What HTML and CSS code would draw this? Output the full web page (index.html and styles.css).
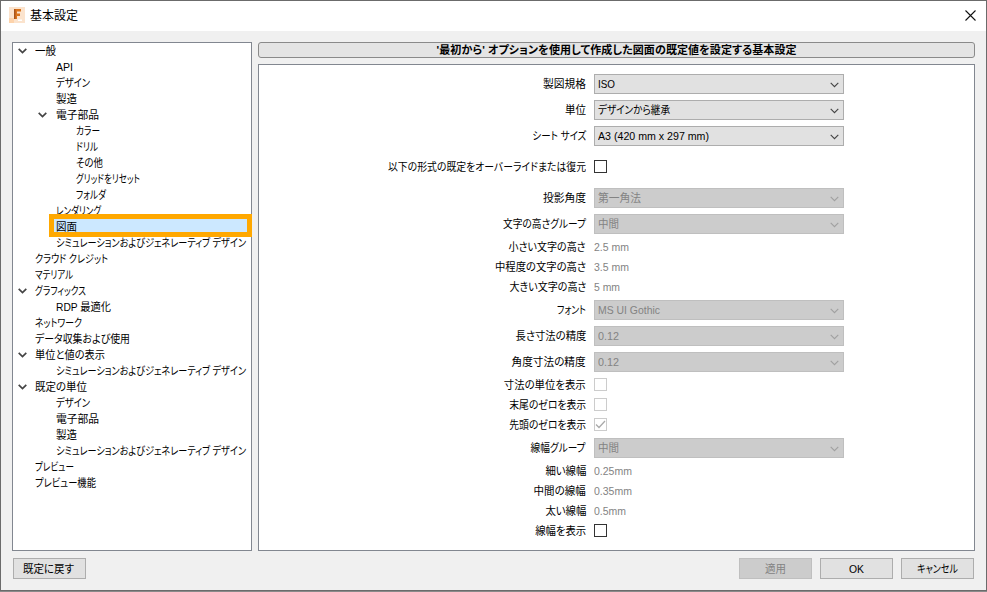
FILE: index.html
```html
<!DOCTYPE html>
<html lang="ja">
<head>
<meta charset="utf-8">
<title>基本設定</title>
<link rel="stylesheet" href="styles.css">
</head>
<body>
<svg class="defs" aria-hidden="true">
  <symbol id="chev" viewBox="0 0 9 6"><path d="M.7 .8 4.5 4.6 8.3 .8" fill="none" stroke="currentColor" stroke-width="1.1"/></symbol>
  <symbol id="open" viewBox="0 0 9 6"><path d="M.7 .9 4.5 4.5 8.3 .9" fill="none" stroke="currentColor" stroke-width="1.7"/></symbol>
</svg>
<div class="dialog">
  <header class="titlebar">
    <svg class="logo" viewBox="0 0 16 16"><rect width="16" height="16" fill="#fbe3cd"/><path d="M0 11h5v5H0z" fill="#fdd3ab"/><path d="M5 2h7v2.500H8v2h3V9H8v3H5z" fill="#d9731c"/><path d="M5 2h1.500v10H5z" fill="#a9541a"/><path d="M9 12.500h4v1.500H9z" fill="#fff"/></svg>
    <h1 class="title"><span class="t" data-w="48">基本設定</span></h1>
    <svg class="close" viewBox="0 0 11 11"><path d="M.5 .5l10 10M10.500 .5l-10 10" stroke="#111" stroke-width="1.100"/></svg>
  </header>
  <main class="body">
    <nav class="tree" id="tree"></nav>
    <section class="content">
      <h2 class="heading"><span class="t" data-w="360">'最初から' オプションを使用して作成した図面の既定値を設定する基本設定</span></h2>
      <div class="form" id="form"></div>
    </section>
  </main>
  <footer class="actions">
    <button class="btn reset"><span class="t" data-w="51">既定に戻す</span></button>
    <button class="btn off"><span class="t" data-w="21">適用</span></button>
    <button class="btn"><span class="t" data-w="15">OK</span></button>
    <button class="btn"><span class="t" data-w="41">キャンセル</span></button>
  </footer>
</div>
<script src="app.js"></script>
</body>
</html>
```
FILE: styles.css
```css
* { box-sizing: border-box; }
body {
  margin: 0;
  width: 987px;
  height: 592px;
  overflow: hidden;
  background: #8a8a8a;
  color: #000;
  font: 11px/16px "Liberation Sans", "Noto Sans CJK JP", sans-serif;
}
.defs { position: absolute; width: 0; height: 0; }
.dialog {
  width: 987px;
  height: 591px;
  display: flex;
  flex-direction: column;
  background: #f0f0f0;
  border: 1px solid #6b6b6b;
}
.titlebar {
  height: 30px;
  flex: none;
  display: flex;
  align-items: center;
  background: #fff;
  padding: 0 10px 2px 8px;
}
.logo { width: 16px; height: 16px; margin-right: 5px; }
.title { margin: 2px 0 0; font-size: 12px; font-weight: 400; flex: 1; }
.close { width: 11px; height: 11px; }
.t {
  display: inline-block;
  white-space: pre;
  font-feature-settings: "palt";
}
.body { height: 509px; margin: 11px 11px 0; flex: none; display: flex; gap: 6px; }
.tree {
  width: 240px;
  background: #fff;
  border: 1px solid #828790;
}
.node { height: 16px; display: flex; align-items: center; padding-left: 5px; position: relative; }
.node.l1 { padding-left: 25px; }
.node.l2 { padding-left: 45px; }
.node svg { width: 9px; height: 6px; color: #444; margin-right: 8px; flex: none; }
.node .gap { width: 17px; flex: none; }
.l1 .gap, .l2 .gap { width: 18px; }
.l1 svg { margin-right: 9px; }
.selected { z-index: 1; }
.selected::before {
  content: "";
  box-sizing: border-box;
  position: absolute;
  z-index: -1;
  left: 36px;
  right: -1px;
  top: -5px;
  height: 23px;
  background: #cce8ff;
  border: 5px solid #ffa800;
}
.content { flex: 1; display: flex; flex-direction: column; gap: 6px; }
.heading {
  height: 16px;
  margin: 0;
  text-align: center;
  font-size: 11px;
  font-weight: 700;
  line-height: 14px;
  background: #e4e4e4;
  border: 1px solid #8a8a8a;
  border-radius: 3px;
}
.form { flex: 1; background: #fff; border: 1px solid #828790; padding-top: 6px; }
.row { height: 20px; display: flex; align-items: center; }
.row.combo { height: 26px; }
.row.spaced { height: 36px; }
.label { width: 327px; text-align: right; margin-right: 8px; }
.label .t { transform-origin: right; }
.select {
  width: 250px;
  height: 20px;
  display: flex;
  align-items: center;
  justify-content: space-between;
  padding: 0 4px 0 3px;
  background: #e1e1e1;
  border: 1px solid #adadad;
}
.select svg { width: 9px; height: 6px; color: #444; margin-top: 2px; }
.select.off { background: #ccc; border-color: #bfbfbf; color: #838383; }
.select.off svg { color: #a0a0a0; }
.value { color: #838383; }
.check { width: 13px; height: 13px; border: 1px solid #333; background: #fff; margin-bottom: 1px; }
.check.off { border-color: #ccc; }
.check svg { display: block; width: 11px; height: 11px; }
.actions { display: flex; gap: 8px; padding: 7px 12px 0 12px; }
.btn {
  width: 73px;
  height: 21px;
  padding: 0;
  display: flex;
  align-items: center;
  justify-content: center;
  font: inherit;
  color: #000;
  background: #e1e1e1;
  border: 1px solid #adadad;
}
.btn.off { background: #ccc; border-color: #bfbfbf; color: #838383; }
.reset { margin-right: auto; padding-right: 2px; }
```
FILE: app.js
```js
// [level, label, label width, state]
const nodes = [
  [0, '一般', 21, 'open'], [1, 'API', 17], [1, 'デザイン', 34], [1, '製造', 21],
  [1, '電子部品', 43, 'open'], [2, 'カラー', 24], [2, 'ドリル', 22], [2, 'その他', 27],
  [2, 'グリッドをリセット', 64], [2, 'フォルダ', 30], [1, 'レンダリング', 45],
  [1, '図面', 21, 'selected'], [1, 'シミュレーションおよびジェネレーティブ デザイン', 190],
  [0, 'クラウド クレジット', 73], [0, 'マテリアル', 38], [0, 'グラフィックス', 51, 'open'],
  [1, 'RDP 最適化', 55], [0, 'ネットワーク', 47], [0, 'データ収集および使用', 95],
  [0, '単位と値の表示', 70, 'open'], [1, 'シミュレーションおよびジェネレーティブ デザイン', 190],
  [0, '既定の単位', 52, 'open'], [1, 'デザイン', 34], [1, '電子部品', 43], [1, '製造', 21],
  [1, 'シミュレーションおよびジェネレーティブ デザイン', 190], [0, 'プレビュー', 39],
  [0, 'プレビュー機能', 61]
];

// [kind, label, label width, value, value width]
const rows = [
  ['combo', '製図規格', 43, 'ISO', 17], ['combo', '単位', 21, 'デザインから継承', 72],
  ['combo', 'シート サイズ', 54, 'A3 (420 mm x 297 mm)', 111],
  ['check spaced', '以下の形式の既定をオーバーライドまたは復元', 198],
  ['combo off', '投影角度', 43, '第一角法', 43], ['combo off', '文字の高さグループ', 83, '中間', 21],
  ['text', '小さい文字の高さ', 77, '2.5 mm', 35], ['text', '中程度の文字の高さ', 91, '3.5 mm', 35],
  ['text', '大きい文字の高さ', 77, '5 mm', 26], ['combo off', 'フォント', 29, 'MS UI Gothic', 62],
  ['combo off', '長さ寸法の精度', 71, '0.12', 21], ['combo off', '角度寸法の精度', 74, '0.12', 21],
  ['check off', '寸法の単位を表示', 82], ['check off', '末尾のゼロを表示', 77],
  ['check off checked', '先頭のゼロを表示', 77], ['combo off', '線幅グループ', 55, '中間', 21],
  ['text', '細い線幅', 41, '0.25mm', 38], ['text', '中間の線幅', 52, '0.35mm', 38],
  ['text', '太い線幅', 41, '0.5mm', 32], ['check', '線幅を表示', 51]
];

const text = (s, w) => `<span class="t" data-w="${w}">${s}</span>`;

document.getElementById('tree').innerHTML = nodes.map(([level, label, w, state]) =>
  `<div class="node l${level} ${state === 'selected' ? 'selected' : ''}">` +
  (state === 'open' ? '<svg><use href="#open"/></svg>' : '<span class="gap"></span>') +
  text(label, w) + '</div>').join('');

const tick = '<svg viewBox="0 0 11 11"><path d="M1 5.500 4 8.500 10 2" fill="none" stroke="#aaa" stroke-width="1.300"/></svg>';

document.getElementById('form').innerHTML = rows.map(([kind, label, w, value, vw]) => {
  const off = kind.includes('off') ? 'off' : '';
  const size = kind.startsWith('combo') ? 'combo' : kind.includes('spaced') ? 'spaced' : '';
  let control;
  if (kind.startsWith('combo')) control = `<div class="select ${off}">${text(value, vw)}<svg><use href="#chev"/></svg></div>`;
  else if (kind.startsWith('check')) control = `<div class="check ${off}">${kind.includes('checked') ? tick : ''}</div>`;
  else control = `<div class="value">${text(value, vw)}</div>`;
  return `<div class="row ${size}"><div class="label">${text(label, w)}</div>${control}</div>`;
}).join('');

document.querySelectorAll('.t').forEach(el => {
  const target = +el.dataset.w;
  const natural = el.getBoundingClientRect().width;
  if (natural <= target) {
    const step = (target - natural) / Math.max(1, el.textContent.length - 1);
    el.style.letterSpacing = step + 'px';
    el.style.marginRight = -step + 'px';
  } else {
    const side = el.closest('.label') ? 'marginLeft' : 'marginRight';
    if (!el.closest('.label')) el.style.transformOrigin = 'left';
    el.style.transform = `scaleX(${target / natural})`;
    el.style[side] = target - natural + 'px';
  }
});
```
